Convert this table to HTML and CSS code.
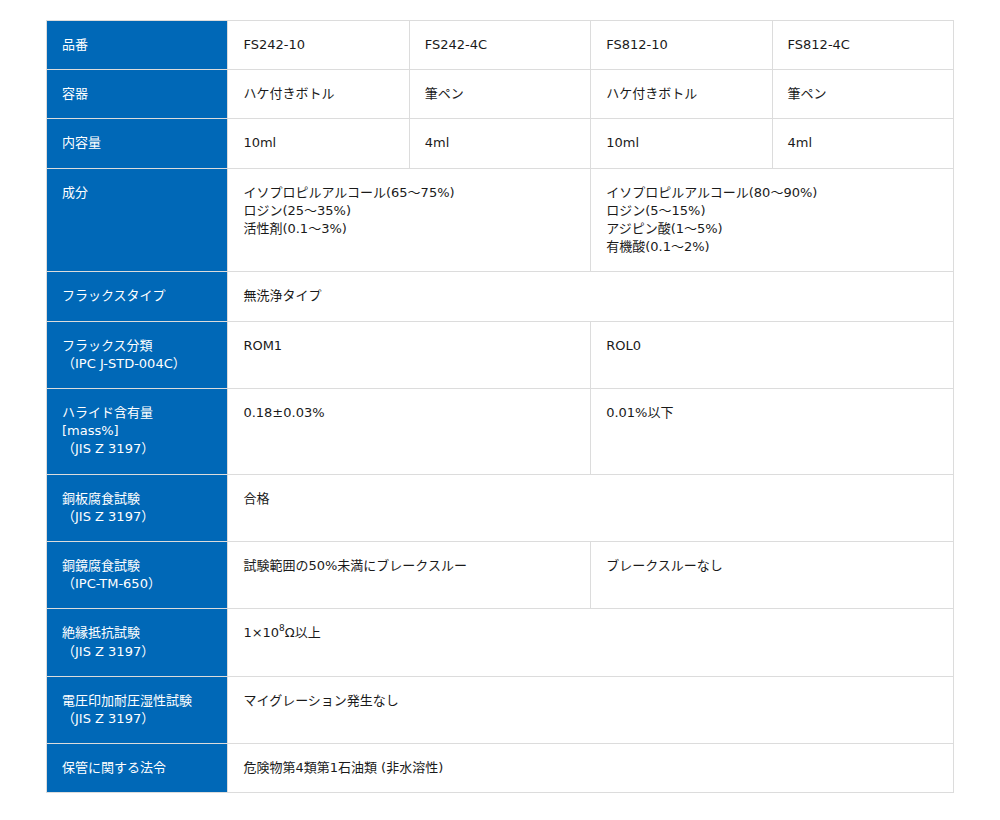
FILE: index.html
```html
<!DOCTYPE html>
<html lang="ja">
<head>
<meta charset="utf-8">
<link rel="stylesheet" href="styles.css">
</head>
<body>
<table class="spec">
  <colgroup><col><col><col><col><col></colgroup>
  <tbody>
    <tr><th>品番</th><td>FS242-10</td><td>FS242-4C</td><td>FS812-10</td><td>FS812-4C</td></tr>
    <tr><th>容器</th><td>ハケ付きボトル</td><td>筆ペン</td><td>ハケ付きボトル</td><td>筆ペン</td></tr>
    <tr><th>内容量</th><td>10ml</td><td>4ml</td><td>10ml</td><td>4ml</td></tr>
    <tr><th>成分</th><td colspan="2">イソプロピルアルコール(65～75%)<br>ロジン(25～35%)<br>活性剤(0.1～3%)</td><td colspan="2">イソプロピルアルコール(80～90%)<br>ロジン(5～15%)<br>アジピン酸(1～5%)<br>有機酸(0.1～2%)</td></tr>
    <tr><th>フラックスタイプ</th><td colspan="4">無洗浄タイプ</td></tr>
    <tr><th>フラックス分類<br>（IPC J-STD-004C）</th><td colspan="2">ROM1</td><td colspan="2">ROL0</td></tr>
    <tr><th>ハライド含有量<br>[mass%]<br>（JIS Z 3197）</th><td colspan="2">0.18±0.03%</td><td colspan="2">0.01%以下</td></tr>
    <tr><th>銅板腐食試験<br>（JIS Z 3197）</th><td colspan="4">合格</td></tr>
    <tr><th>銅鏡腐食試験<br>（IPC-TM-650）</th><td colspan="2">試験範囲の50%未満にブレークスルー</td><td colspan="2">ブレークスルーなし</td></tr>
    <tr><th>絶縁抵抗試験<br>（JIS Z 3197）</th><td colspan="4">1×10<sup>8</sup>Ω以上</td></tr>
    <tr><th>電圧印加耐圧湿性試験<br>（JIS Z 3197）</th><td colspan="4">マイグレーション発生なし</td></tr>
    <tr><th>保管に関する法令</th><td colspan="4">危険物第4類第1石油類 (非水溶性)</td></tr>
  </tbody>
</table>
</body>
</html>
```
FILE: styles.css
```css
html, body {
  margin: 0;
  padding: 0;
  background: #fff;
}
body {
  padding-top: 20px;
  font-family: "DejaVu Sans", "Noto Sans CJK JP", sans-serif;
  font-size: 13px;
  line-height: 18.2px;
  color: #1a1a1a;
}
.spec {
  width: 908px;
  margin: 0 auto;
  border-collapse: collapse;
  table-layout: fixed;
  border: 1px solid #dcdcdc;
}
.spec th,
.spec td {
  padding: 15px 16px 15px 15px;
  text-align: left;
  vertical-align: top;
  border: 1px solid #dcdcdc;
  font-weight: normal;
}
.spec th {
  background: #0068b7;
  color: #fff;
}
.spec sup {
  font-size: 9px;
  line-height: 0;
  vertical-align: 6px;
}
```
